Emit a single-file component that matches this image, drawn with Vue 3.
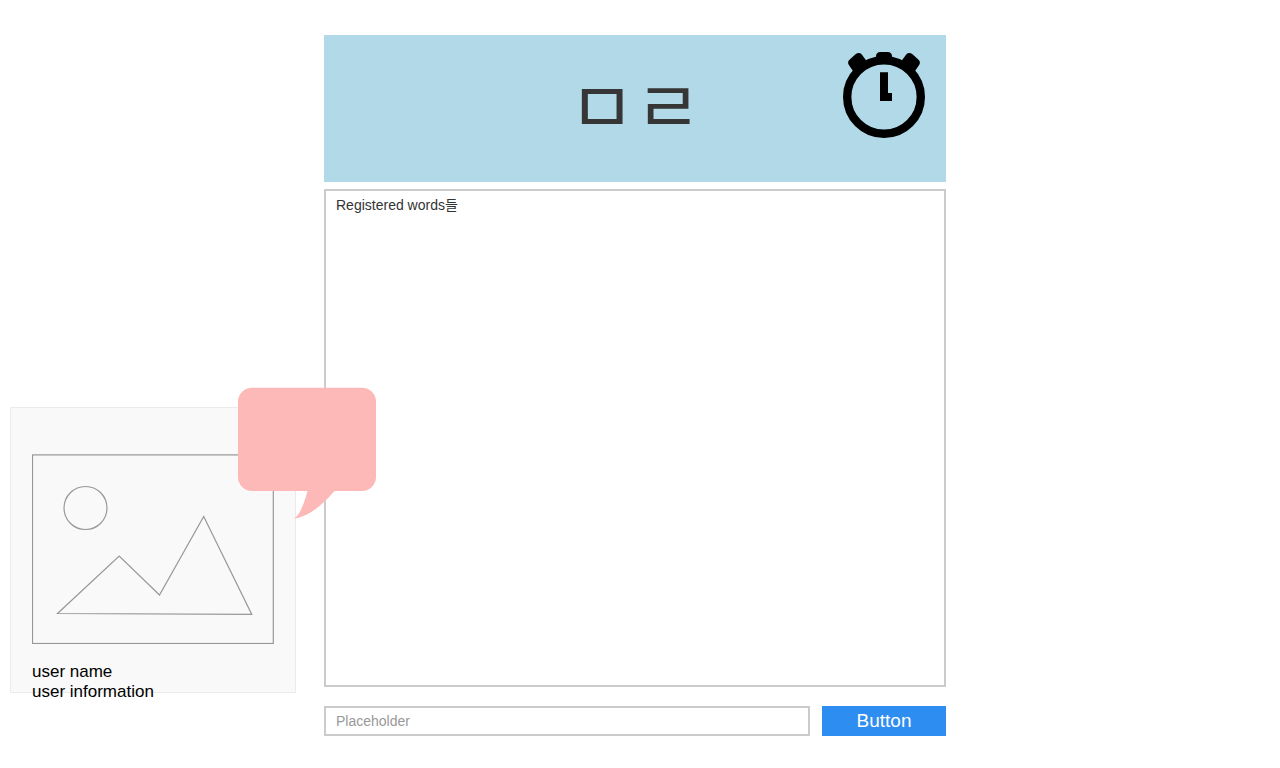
<script setup>
import { ref } from 'vue'

const initials = 'ㅁㄹ'
const user = { name: 'user name', info: 'user information' }
const word = ref('')
</script>

<template>
  <div class="page">
    <aside class="card">
      <svg class="photo" viewBox="0 0 242 190" role="img" aria-label="User picture">
        <g fill="none" stroke="#979797" stroke-width="1.2">
          <rect x="0.5" y="0.9" width="240.800" height="188.600" />
          <circle cx="53.5" cy="54" r="21.5" />
          <path d="M25.5 159.500 L87.200 102 L127.500 141 L171.700 62.500 L219.800 160.400 Z" />
        </g>
      </svg>
      <p class="user">{{ user.name }}<br />{{ user.info }}</p>
      <svg class="bubble" viewBox="0 0 138 132" aria-hidden="true">
        <path
          fill="#fdb9b8"
          d="M14 0.700 H124 A14 14 0 0 1 138 14.700 V90 A14 14 0 0 1 124 104 H96.500 Q74 130 56 131.500 Q63 128 69.500 104 H14 A14 14 0 0 1 0 90 V14.700 A14 14 0 0 1 14 0.700 Z"
        />
      </svg>
    </aside>

    <main class="main">
      <header class="banner">
        <h1 class="title">{{ initials }}</h1>
        <svg class="timer" viewBox="0 0 82 86" role="img" aria-label="Timer">
          <circle cx="41" cy="45" r="36.800" fill="none" stroke="#000" stroke-width="8.400" />
          <path d="M33 10 V4.500 Q33 0 37.500 0 H44.500 Q49 0 49 4.500 V10 Z" />
          <path d="M12 22 L9.800 18.700 L5.700 12.800 Q4 9.500 7 7.200 L12.500 2.300 Q16 0 18.600 2.200 L23 8.200 L28 12 Z" />
          <path d="M70 22 L72.200 18.700 L76.300 12.800 Q78 9.500 75 7.200 L69.500 2.300 Q66 0 63.400 2.200 L59 8.200 L54 12 Z" />
          <path d="M37 20.300 H45 V41 H49 V49 H37 Z" />
        </svg>
      </header>

      <section class="words">Registered words들</section>

      <form class="entry" @submit.prevent>
        <input v-model="word" class="field" type="text" placeholder="Placeholder" aria-label="Word" />
        <button class="send" type="submit">Button</button>
      </form>
    </main>
  </div>
</template>

<style>
body {
  margin: 0;
  background: #fff;
}
</style>

<style scoped>
.page {
  box-sizing: border-box;
  min-height: 100vh;
  display: grid;
  grid-template-columns: 286px minmax(0, 1fr) 296px;
  column-gap: 28px;
  padding: 35px 10px 32px;
  font-family: "Liberation Sans", "Noto Sans CJK KR", sans-serif;
}

.card {
  position: relative;
  box-sizing: border-box;
  align-self: end;
  height: 286px;
  margin-bottom: 43px;
  padding: 46px 21px 0;
  border: 1px solid #ebebeb;
  background: #f9f9f9;
}

.photo {
  display: block;
  width: 100%;
}

.user {
  margin: 18px 0 0;
  font-size: 17px;
  line-height: 20px;
  color: #000;
}

.bubble {
  position: absolute;
  left: 227px;
  top: -21px;
  width: 138px;
  height: 132px;
}

.main {
  display: flex;
  flex-direction: column;
}

.banner {
  display: grid;
  grid-template-columns: 1fr auto 1fr;
  min-height: 147px;
  background: #b2d9e7;
}

.title {
  grid-column: 2;
  align-self: center;
  margin: 0;
  padding-bottom: 13px;
  font-family: "Noto Sans CJK KR", sans-serif;
  font-size: 72px;
  font-weight: 400;
  line-height: 80px;
  color: #363636;
}

.timer {
  justify-self: end;
  width: 82px;
  height: 86px;
  margin: 17px 21px 0 0;
}

.words {
  flex: 1;
  margin-top: 7px;
  padding: 4px 10px;
  border: 2px solid #cbcbcb;
  font-size: 14px;
  line-height: 20px;
  color: #333;
}

.entry {
  display: flex;
  gap: 12px;
  margin-top: 19px;
}

.field {
  box-sizing: border-box;
  flex: 1;
  min-width: 0;
  height: 30px;
  padding: 0 10px;
  border: 2px solid #cbcbcb;
  border-radius: 0;
  background: #fff;
  font-family: inherit;
  font-size: 14px;
  color: #333;
}

.field::placeholder {
  color: #999;
  opacity: 1;
}

.send {
  width: 124px;
  height: 30px;
  padding: 0;
  border: 0;
  background: #2e8df0;
  font-family: inherit;
  font-size: 19px;
  line-height: 30px;
  color: #fff;
}
</style>
